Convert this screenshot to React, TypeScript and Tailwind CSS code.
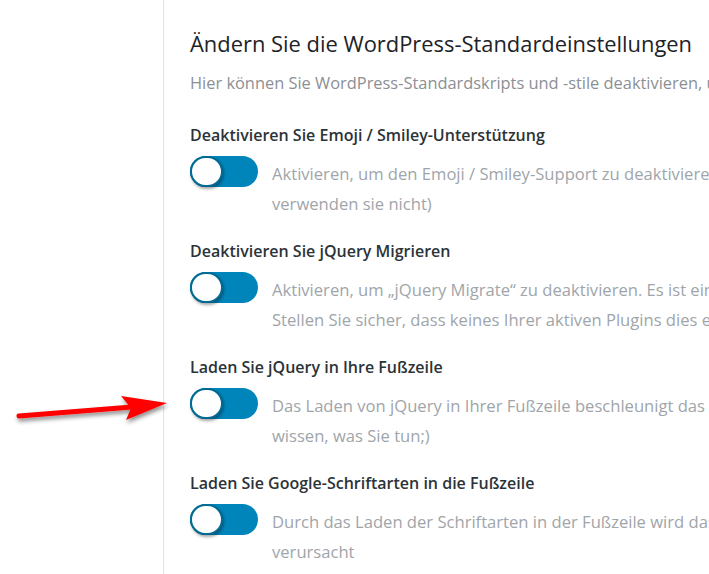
import React from "react";

const items = [
  {
    label: "Deaktivieren Sie Emoji / Smiley-Unterstützung",
    lines: [
      "Aktivieren, um den Emoji / Smiley-Support zu deaktivieren. (Die meisten Websites",
      "verwenden sie nicht)",
    ],
  },
  {
    label: "Deaktivieren Sie jQuery Migrieren",
    lines: [
      "Aktivieren, um „jQuery Migrate“ zu deaktivieren. Es ist eine veraltete Bibliothek.",
      "Stellen Sie sicher, dass keines Ihrer aktiven Plugins dies erfordert.",
    ],
  },
  {
    label: "Laden Sie jQuery in Ihre Fußzeile",
    lines: [
      "Das Laden von jQuery in Ihrer Fußzeile beschleunigt das Laden, tun Sie dies nur, wenn Sie",
      "wissen, was Sie tun;)",
    ],
  },
  {
    label: "Laden Sie Google-Schriftarten in die Fußzeile",
    lines: [
      "Durch das Laden der Schriftarten in der Fußzeile wird das Rendering nicht blockiert",
      "verursacht",
    ],
  },
];

function Toggle() {
  return (
    <div className="relative w-[68px] h-[31px] shrink-0 rounded-full bg-[#0085ba]">
      <div className="absolute left-0 top-0 w-[33px] h-[31px] rounded-full bg-white border-[2px] border-[#006a94] shadow-[1px_2px_3px_rgba(0,0,0,0.35)]" />
    </div>
  );
}

export default function App() {
  return (
    <div className="w-[709px] h-[574px] overflow-hidden bg-white flex">
      <div className="relative w-[164px] shrink-0 border-r border-[#e2e2e2]">
        <svg
          className="absolute left-0 top-[385px]"
          width="180"
          height="45"
          viewBox="0 385 180 45"
        >
          <defs>
            <filter id="sh" x="-10%" y="-50%" width="130%" height="250%">
              <feDropShadow dx="1" dy="3" stdDeviation="2" floodColor="#000" floodOpacity="0.45" />
            </filter>
          </defs>
          <g filter="url(#sh)">
            <line x1="19" y1="416" x2="132" y2="407" stroke="#ff0000" strokeWidth="5" strokeLinecap="round" />
            <polygon points="121,396 167,403 126,420 131,408" fill="#ff0000" />
          </g>
        </svg>
      </div>
      <div className="w-[620px] shrink-0 pl-[26px] pt-[30px] whitespace-nowrap">
        <div className="text-[21.9px] leading-[28px] text-[#1d2327] font-['Open_Sans',sans-serif]">
          Ändern Sie die WordPress-Standardeinstellungen
        </div>
        <div className="mt-[13px] text-[16.4px] leading-[24px] text-[#8c8f94] font-['Open_Sans',sans-serif]">
          Hier können Sie WordPress-Standardskripts und -stile deaktivieren, um die Leistung zu verbessern.
        </div>
        <div className="mt-[28px] flex flex-col gap-[20px]">
          {items.map((it) => (
            <div key={it.label}>
              <div className="text-[16px] leading-[24px] font-semibold text-[#2c3338] font-['Open_Sans',sans-serif]">
                {it.label}
              </div>
              <div className="mt-[9px] flex items-start gap-[14px]">
                <Toggle />
                <div className="pt-[3px] text-[16.6px] leading-[30px] text-[#a0a5aa] font-['Open_Sans',sans-serif]">
                  {it.lines.map((l) => (
                    <div key={l}>{l}</div>
                  ))}
                </div>
              </div>
            </div>
          ))}
        </div>
      </div>
    </div>
  );
}
